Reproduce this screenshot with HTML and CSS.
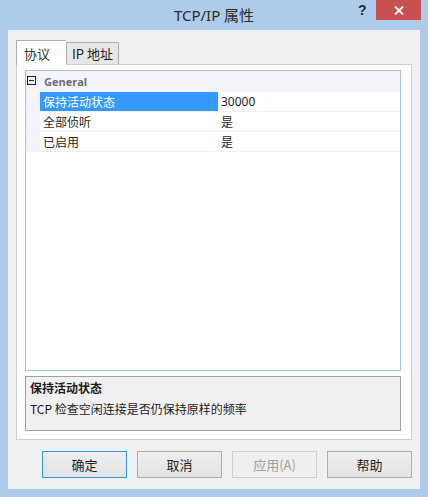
FILE: index.html
```html
<!DOCTYPE html>
<html lang="zh-CN">
<head>
    <meta charset="UTF-8">
    <meta name="viewport" content="width=device-width, initial-scale=1.0">
    <title>TCP/IP 属性</title>
    <link rel="stylesheet" href="styles.css">
</head>
<body>
    <div class="window">
        <div class="titlebar">
            <span class="title">TCP/IP 属性</span>
            <span class="help-btn">?</span>
            <span class="close-btn">
                <svg width="10" height="9" viewBox="0 0 10 9"><path d="M1 0.5 L9 8.5 M9 0.5 L1 8.5" stroke="#fff" stroke-width="1.8"/></svg>
            </span>
        </div>
        <div class="client">
            <div class="tabs">
                <div class="tab active">协议</div>
                <div class="tab">IP 地址</div>
            </div>
            <div class="panel">
                <div class="grid">
                    <div class="category">
                        <span class="toggle"><span class="minus"></span></span>
                        <span class="cat-name">General</span>
                    </div>
                    <div class="row selected">
                        <div class="name">保持活动状态</div>
                        <div class="value">30000</div>
                    </div>
                    <div class="row">
                        <div class="name">全部侦听</div>
                        <div class="value">是</div>
                    </div>
                    <div class="row">
                        <div class="name">已启用</div>
                        <div class="value">是</div>
                    </div>
                    <div class="filler"></div>
                </div>
                <div class="desc">
                    <p class="desc-title">保持活动状态</p>
                    <p class="desc-text">TCP 检查空闲连接是否仍保持原样的频率</p>
                </div>
            </div>
            <div class="buttons">
                <button class="btn default">确定</button>
                <button class="btn">取消</button>
                <button class="btn" disabled>应用(A)</button>
                <button class="btn">帮助</button>
            </div>
        </div>
    </div>
</body>
</html>
```
FILE: styles.css
```css
*{
    margin: 0px;
    box-sizing: border-box;
}
body{
    background-color: #aecbea;
    font-family: "Noto Sans CJK SC", "Noto Sans", sans-serif;
    font-size: 12px;
    color: #1e1e1e;
}
.window{
    width: 428px;
    height: 497px;
    display: flex;
    flex-direction: column;
    background-color: #aecbea;
}
.titlebar{
    height: 30px;
    position: relative;
    display: flex;
    justify-content: center;
    align-items: center;
}
.title{
    font-family: "Noto Sans", "Noto Sans CJK SC", sans-serif;
    font-size: 15px;
    color: #2b2b2b;
    margin-top: -2px;
}
.help-btn{
    position: absolute;
    left: 358px;
    top: 2px;
    font-family: "Liberation Sans", sans-serif;
    font-weight: bold;
    font-size: 14px;
    color: #1e2a3a;
}
.close-btn{
    position: absolute;
    left: 376px;
    top: 0px;
    width: 45px;
    height: 20px;
    background-color: #c75050;
    display: flex;
    align-items: center;
    justify-content: center;
}
.client{
    flex: 1;
    margin: 0px 8px 8px 8px;
    background-color: #f0f0f0;
    padding: 10px 8px 11px 8px;
    display: flex;
    flex-direction: column;
}
.tabs{
    display: flex;
    align-items: flex-end;
    height: 24px;
    position: relative;
    z-index: 1;
}
.tab{
    height: 22px;
    padding: 0px 5px;
    border: 1px solid #adadad;
    border-bottom: none;
    background-color: #e6e6e6;
    display: flex;
    align-items: center;
    font-size: 13px;
}
.tab.active{
    height: 25px;
    width: 50px;
    background-color: #ffffff;
    padding-left: 7px;
    margin-bottom: -1px;
    border-right: none;
    color: #333;
}
.panel{
    flex: 1;
    background-color: #ffffff;
    border: 1px solid #d0d0d0;
    padding: 5px 10px 8px 8px;
    display: flex;
    flex-direction: column;
    gap: 5px;
}
.grid{
    flex: 1;
    border: 1px solid #a7c4e2;
    display: flex;
    flex-direction: column;
    background-color: #ffffff;
}
.category{
    height: 21px;
    background-color: #f2f4f9;
    display: flex;
    align-items: center;
    padding-left: 1px;
}
.toggle{
    width: 9px;
    height: 9px;
    border: 1px solid #222;
    display: flex;
    align-items: center;
    justify-content: center;
    margin-right: 8px;
    margin-top: -3px;
}
.minus{
    width: 5px;
    height: 1px;
    background-color: #222;
}
.cat-name{
    font-family: "Open Sans", "Noto Sans", sans-serif;
    font-weight: bold;
    font-size: 11px;
    color: #6d6d6d;
}
.row{
    height: 20px;
    display: flex;
    border-left: 14px solid #f2f4f9;
    border-bottom: 1px solid #f0f0f0;
}
.name{
    width: 178px;
    padding-left: 3px;
    display: flex;
    align-items: center;
}
.value{
    flex: 1;
    padding-left: 3px;
    display: flex;
    align-items: center;
    font-family: "Noto Sans", "Noto Sans CJK SC", sans-serif;
}
.row.selected .name{
    background-color: #3399ff;
    color: #ffffff;
}
.filler{
    flex: 1;
}
.desc{
    height: 55px;
    border: 1px solid #a0a0a0;
    background-color: #f0f0f0;
    padding: 2px 4px;
}
.desc-title{
    font-weight: bold;
    line-height: 18px;
}
.desc-text{
    line-height: 23px;
}
.buttons{
    display: flex;
    justify-content: flex-end;
    gap: 10px;
    margin-top: 11px;
}
.btn{
    width: 85px;
    height: 27px;
    border: 1px solid #adadad;
    background: linear-gradient(#efefef, #e3e3e3);
    font-family: "Noto Sans CJK SC", "Noto Sans", sans-serif;
    font-size: 13px;
    color: #1e1e1e;
}
.btn.default{
    border-color: #3399dd;
}
.btn:disabled{
    color: #a0a0a0;
    background: #efefef;
    border-color: #d0d0d0;
}
```
